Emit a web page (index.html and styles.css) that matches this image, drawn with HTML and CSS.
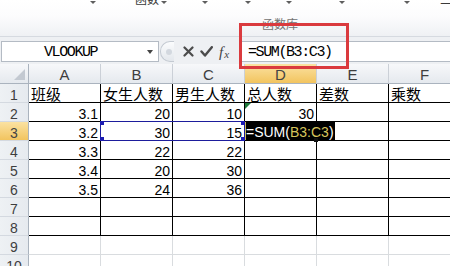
FILE: index.html
```html
<!DOCTYPE html>
<html>
<head>
<meta charset="utf-8">
<link rel="stylesheet" href="styles.css">
</head>
<body>
<div class="app">
  <div class="ribbon">
    <div class="ribbon-top">
      <span class="tri t1"></span>
      <span class="rtext r1">函数</span>
      <span class="tri t2"></span>
      <span class="tri t3"></span>
      <span class="tri t4"></span>
      <span class="tri t5"></span>
      <span class="tri t6"></span>
      <span class="tri t7"></span>
      <span class="rtext r2">三</span>
    </div>
    <div class="group-label">函数库</div>
  </div>

  <div class="fbar">
    <div class="namebox"><span class="nb-text">VLOOKUP</span><span class="nb-arrow"></span></div>
    <div class="grip"><span class="grip-dot"></span></div>
    <span class="fbtn fb-x"><svg width="11" height="11" viewBox="0 0 11 11"><path d="M1.5 1.5 L9.5 9.5 M9.5 1.5 L1.5 9.5" stroke="#4b4b4b" stroke-width="2.2" fill="none" stroke-linecap="round"/></svg></span>
    <span class="fbtn fb-ok"><svg width="13" height="11" viewBox="0 0 13 11"><path d="M1.5 5.5 L5 9.5 L11.8 1.2" stroke="#4b4b4b" stroke-width="2.4" fill="none" stroke-linecap="round" stroke-linejoin="round"/></svg></span>
    <span class="fbtn fb-fx">f<span class="fx-x">x</span></span>
    <div class="finput">=SUM(B3:C3)</div>
  </div>

  <div class="sheet">
    <div class="h corner"><svg class="corner-tri" width="11" height="11" viewBox="0 0 11 11"><path d="M11 0 L11 11 L0 11 Z" fill="#c3c9d1"/></svg></div>
    <div class="h">A</div>
    <div class="h">B</div>
    <div class="h">C</div>
    <div class="h sel">D</div>
    <div class="h">E</div>
    <div class="h">F</div>

    <div class="rh">1</div>
    <div class="c t">班级</div>
    <div class="c t">女生人数</div>
    <div class="c t">男生人数</div>
    <div class="c t">总人数</div>
    <div class="c t">差数</div>
    <div class="c t">乘数</div>

    <div class="rh">2</div>
    <div class="c n">3.1</div>
    <div class="c n">20</div>
    <div class="c n">10</div>
    <div class="c n">30</div>
    <div class="c"></div>
    <div class="c"></div>

    <div class="rh sel">3</div>
    <div class="c n">3.2</div>
    <div class="c n">30</div>
    <div class="c n">15</div>
    <div class="c edit-cell"><span class="edit">=SUM(<span class="ref">B3:C3</span>)</span></div>
    <div class="c"></div>
    <div class="c"></div>

    <div class="rh">4</div>
    <div class="c n">3.3</div>
    <div class="c n">22</div>
    <div class="c n">22</div>
    <div class="c"></div>
    <div class="c"></div>
    <div class="c"></div>

    <div class="rh">5</div>
    <div class="c n">3.4</div>
    <div class="c n">20</div>
    <div class="c n">30</div>
    <div class="c"></div>
    <div class="c"></div>
    <div class="c"></div>

    <div class="rh">6</div>
    <div class="c n">3.5</div>
    <div class="c n">24</div>
    <div class="c n">36</div>
    <div class="c"></div>
    <div class="c"></div>
    <div class="c"></div>

    <div class="rh">7</div>
    <div class="c"></div>
    <div class="c"></div>
    <div class="c"></div>
    <div class="c"></div>
    <div class="c"></div>
    <div class="c"></div>

    <div class="rh">8</div>
    <div class="c"></div>
    <div class="c"></div>
    <div class="c"></div>
    <div class="c"></div>
    <div class="c"></div>
    <div class="c"></div>

    <div class="rh">9</div>
    <div class="c g"></div>
    <div class="c g"></div>
    <div class="c g"></div>
    <div class="c g"></div>
    <div class="c g"></div>
    <div class="c g"></div>

    <div class="rh">10</div>
    <div class="c g"></div>
    <div class="c g"></div>
    <div class="c g"></div>
    <div class="c g"></div>
    <div class="c g"></div>
    <div class="c g"></div>

    <div class="range"></div>
    <span class="rsq sq1"></span>
    <span class="rsq sq2"></span>
    <span class="rsq sq3"></span>
    <span class="rsq sq4"></span>
    <span class="err-tri"></span>
    <span class="fill-handle"></span>
  </div>

  <div class="redbox"></div>
</div>
</body>
</html>
```

FILE: styles.css
```css
* { box-sizing: border-box; }
html, body { margin: 0; padding: 0; }
body {
  width: 450px;
  height: 266px;
  overflow: hidden;
  background: #fff;
  font-family: "Liberation Sans", "Noto Sans CJK SC", sans-serif;
}
.app {
  position: relative;
  width: 450px;
  height: 266px;
  overflow: hidden;
}

/* ribbon */
.ribbon {
  height: 37px;
  background: linear-gradient(#ffffff 0%, #fcfcfd 45%, #eff1f4 100%);
  border-bottom: 1px solid #d6dae0;
}
.ribbon-top {
  display: flex;
  align-items: flex-start;
  height: 8px;
}
.tri {
  flex: none;
  width: 0;
  height: 0;
  border-left: 3px solid transparent;
  border-right: 3px solid transparent;
  border-top: 3px solid #5e5e5e;
  margin-top: 1px;
}
.rtext {
  flex: none;
  font-size: 12px;
  line-height: 14px;
  margin-top: -7px;
  color: #3a3a3a;
}
.t1 { margin-left: 90px; }
.r1 { margin-left: 39px; }
.t2 { margin-left: 2px; }
.t3 { margin-left: 35px; }
.t4 { margin-left: 37px; }
.t5 { margin-left: 35px; }
.t6 { margin-left: 47px; }
.t7 { margin-left: 59px; }
.r2 { margin-left: 30px; }
.group-label {
  margin: 10px 0 0 262px;
  font-size: 12px;
  line-height: 14px;
  color: #727272;
}

/* formula bar */
.fbar {
  height: 27px;
  background: #eef0f3;
  display: flex;
  align-items: flex-start;
  padding-top: 4px;
}
.namebox {
  flex: none;
  margin-left: 1px;
  width: 158px;
  height: 21px;
  background: #fff;
  border: 1px solid #b4bbc4;
  display: flex;
  align-items: center;
  padding-top: 2px;
  font-family: "Liberation Mono", monospace;
  font-size: 15px;
  letter-spacing: -1.4px;
  color: #000;
}
.nb-text { flex: 1; padding-left: 42px; }
.nb-arrow {
  flex: none;
  width: 0;
  height: 0;
  margin-top: -2px;
  margin-right: 5px;
  border-left: 3px solid transparent;
  border-right: 3px solid transparent;
  border-top: 4px solid #444;
}
.grip {
  flex: none;
  margin-left: 1px;
  width: 14px;
  height: 21px;
  border: 1px solid #c4cad2;
  border-right: none;
  border-radius: 10px 0 0 10px;
  background: linear-gradient(#fbfcfd, #e3e7ec);
  display: flex;
  align-items: center;
  justify-content: center;
}
.grip-dot {
  width: 6px;
  height: 6px;
  border-radius: 50%;
  background: #d3d8df;
  margin-left: 2px;
}
.fbtn {
  flex: none;
  height: 21px;
  display: flex;
  align-items: center;
}
.fb-x { margin-left: 9px; }
.fb-ok { margin-left: 6px; }
.fb-fx {
  margin-left: 6px;
  width: 14px;
  font-family: "Liberation Serif", serif;
  font-style: italic;
  font-size: 15px;
  color: #444;
  padding-top: 1px;
}
.fx-x { font-size: 11px; margin-top: 4px; margin-left: 1px; }
.finput {
  flex: 1;
  margin-left: 6px;
  height: 21px;
  background: #fff;
  border: 1px solid #b4bbc4;
  border-right: none;
  padding-left: 8px;
  padding-top: 2px;
  font-family: "Liberation Mono", monospace;
  font-size: 15px;
  letter-spacing: -1.4px;
  line-height: 17px;
  color: #000;
}

/* sheet */
.sheet {
  position: relative;
  display: grid;
  grid-template-columns: 29px repeat(6, 72px);
  grid-template-rows: 20px repeat(10, 19px);
}
.h {
  background: linear-gradient(#f7f8fa, #e5e9ee);
  border-right: 1px solid #cbd0d7;
  border-bottom: 1px solid #aab3be;
  color: #3e3e3e;
  font-size: 15px;
  display: flex;
  align-items: center;
  justify-content: center;
  padding-top: 2px;
}
.corner {
  border-right-color: #aab3be;
  position: relative;
}
.corner-tri {
  position: absolute;
  right: 3px;
  bottom: 3px;
}
.rh {
  background: linear-gradient(90deg, #eef1f4, #e6eaef);
  border-right: 1px solid #aab3be;
  border-bottom: 1px solid #d4d9e0;
  color: #3e3e3e;
  font-size: 14px;
  line-height: 14px;
  display: flex;
  align-items: flex-end;
  justify-content: center;
}
.h.sel, .rh.sel {
  background: linear-gradient(#fbe2a2, #f2c45f);
  color: #444;
}
.c {
  border-right: 1px solid #000;
  border-bottom: 1px solid #000;
  display: flex;
  align-items: flex-end;
  font-size: 14px;
  line-height: 14px;
  color: #000;
  white-space: nowrap;
}
.c.g { border-color: #d9dcdf; }
.c.n { justify-content: flex-end; padding-right: 2px; }
.c.t { padding-left: 2px; font-size: 15px; }
.edit-cell { align-items: flex-start; }
.edit {
  display: inline-block;
  height: 18px;
  padding: 2px 1px 0 0;
  line-height: 16px;
  background: #000;
  color: #fff;
  border-left: 1px solid #cdbb55;
}
.ref { color: #d6c45c; }

/* overlays */
.range {
  position: absolute;
  left: 100px;
  top: 57px;
  width: 145px;
  height: 20px;
  border: 1px solid #1d1d9c;
}
.rsq {
  position: absolute;
  width: 4px;
  height: 4px;
  background: #1c1cb2;
}
.sq1 { left: 100px; top: 57px; }
.sq2 { left: 100px; top: 73px; }
.sq3 { left: 241px; top: 57px; }
.sq4 { left: 241px; top: 73px; }
.err-tri {
  position: absolute;
  left: 245px;
  top: 39px;
  width: 0;
  height: 0;
  border-top: 6px solid #1f7a3c;
  border-right: 6px solid transparent;
}
.fill-handle {
  position: absolute;
  left: 314px;
  top: 74px;
  width: 4px;
  height: 4px;
  background: #111;
}
.redbox {
  position: absolute;
  left: 239px;
  top: 23px;
  width: 110px;
  height: 46px;
  border: 3px solid #da3a3e;
}
```
